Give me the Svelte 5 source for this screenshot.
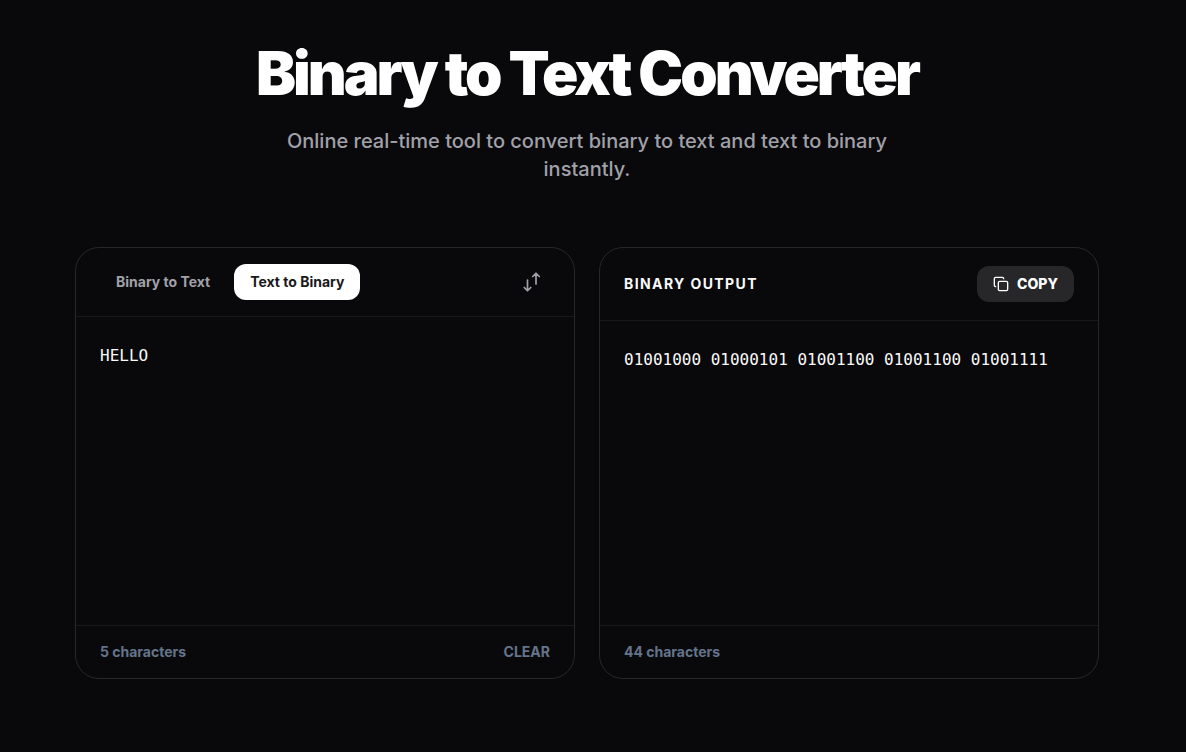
<script>
  let mode = $state('encode')
  let input = $state('HELLO')
  let copied = $state(false)

  function toBinary(text) {
    return [...new TextEncoder().encode(text)]
      .map((b) => b.toString(2).padStart(8, '0'))
      .join(' ')
  }

  function toText(bits) {
    const bytes = bits.match(/[01]{1,8}/g) ?? []
    return new TextDecoder().decode(new Uint8Array(bytes.map((b) => parseInt(b, 2))))
  }

  let output = $derived(mode === 'encode' ? toBinary(input) : toText(input))

  function setMode(next) {
    if (next === mode) return
    const current = output
    mode = next
    input = current
  }

  function swap() {
    setMode(mode === 'encode' ? 'decode' : 'encode')
  }

  async function copy() {
    await navigator.clipboard.writeText(output)
    copied = true
    setTimeout(() => (copied = false), 1500)
  }
</script>

<main class="page">
  <header class="hero">
    <h1>Binary to Text Converter</h1>
    <p>Online real-time tool to convert binary to text and text to binary instantly.</p>
  </header>

  <div class="panels">
    <!-- Input -->
    <section class="panel">
      <div class="panel-head">
        <div class="tabs">
          <button class="tab" class:active={mode === 'decode'} onclick={() => setMode('decode')}>Binary to Text</button>
          <button class="tab" class:active={mode === 'encode'} onclick={() => setMode('encode')}>Text to Binary</button>
        </div>
        <button class="swap" aria-label="Swap direction" onclick={swap}>
          <svg viewBox="0 0 20 20" width="20" height="20" fill="none" stroke="currentColor" stroke-width="1.7" stroke-linecap="round" stroke-linejoin="round">
            <path d="M5.5 8v10.5M2.25 15.5l3.25 3.25 3.25-3.25"/>
            <path d="M14 12V1.5M10.75 4.5L14 1.25l3.25 3.25"/>
          </svg>
        </button>
      </div>
      <textarea class="code" aria-label="Input" spellcheck="false" bind:value={input}></textarea>
      <div class="panel-foot">
        <span>{input.length} characters</span>
        <button class="clear" onclick={() => (input = '')}>CLEAR</button>
      </div>
    </section>

    <!-- Output -->
    <section class="panel">
      <div class="panel-head">
        <h2>{mode === 'encode' ? 'BINARY OUTPUT' : 'TEXT OUTPUT'}</h2>
        <button class="copy" onclick={copy}>
          <svg viewBox="0 0 24 24" width="16" height="16" fill="none" stroke="currentColor" stroke-width="2" stroke-linecap="round" stroke-linejoin="round">
            <rect x="8" y="8" width="14" height="14" rx="2"/>
            <path d="M4 16c-1.1 0-2-.9-2-2V4c0-1.1.9-2 2-2h10c1.1 0 2 .9 2 2"/>
          </svg>
          {copied ? 'COPIED' : 'COPY'}
        </button>
      </div>
      <output class="code">{output}</output>
      <div class="panel-foot">
        <span>{output.length} characters</span>
      </div>
    </section>
  </div>
</main>

<style>
  :global(body) {
    margin: 0;
    background: #09090b;
  }

  .page {
    box-sizing: border-box;
    min-height: 100vh;
    padding: 40px 36px 72px 24px;
    background: #09090b;
    color: #fafafa;
    font-family: Inter, "Liberation Sans", sans-serif;
  }

  .hero {
    max-width: 672px;
    margin: 0 auto 64px;
    text-align: center;
  }

  h1 {
    margin: 0 0 21px;
    color: #fff;
    font-size: 60px;
    font-weight: 900;
    line-height: 66px;
    letter-spacing: -0.05em;
    white-space: nowrap;
  }

  .hero p {
    margin: 0;
    color: #a1a1aa;
    font-size: 20px;
    font-weight: 500;
    line-height: 28px;
  }

  .panels {
    display: grid;
    grid-template-columns: repeat(2, minmax(0, 1fr));
    gap: 24px;
    max-width: 1024px;
    margin: 0 auto;
  }

  .panel {
    display: flex;
    flex-direction: column;
    min-height: 430px;
    border: 1px solid #27272a;
    border-radius: 24px;
    overflow: hidden;
  }

  .panel-head {
    display: flex;
    align-items: center;
    justify-content: space-between;
    padding: 16px 24px;
    border-bottom: 1px solid #18181b;
  }

  .panel-head:has(h2) { padding: 18px 24px; }

  .tabs {
    display: flex;
    gap: 8px;
  }

  button {
    border: 0;
    background: none;
    font-family: inherit;
    cursor: pointer;
  }

  .tab {
    padding: 8px 16px;
    border-radius: 12px;
    color: #a1a1aa;
    font-size: 14px;
    font-weight: 700;
    line-height: 20px;
  }

  .tab.active {
    background: #fff;
    color: #18181b;
  }

  .swap {
    display: flex;
    padding: 8px;
    color: #a1a1aa;
  }

  h2 {
    margin: 0;
    font-size: 14px;
    font-weight: 700;
    line-height: 20px;
    letter-spacing: 0.1em;
  }

  .copy {
    display: flex;
    align-items: center;
    gap: 8px;
    padding: 8px 16px;
    border-radius: 12px;
    background: #27272a;
    color: #fff;
    font-size: 14px;
    font-weight: 800;
    line-height: 20px;
  }

  .code {
    flex: 1;
    padding: 24px;
    border: 0;
    outline: 0;
    resize: none;
    background: none;
    color: #fafafa;
    font-family: Consolas, "DejaVu Sans Mono", monospace;
    font-size: 16px;
    line-height: 30px;
    overflow-wrap: anywhere;
  }

  .panel-foot {
    display: flex;
    align-items: center;
    justify-content: space-between;
    padding: 16px 24px;
    border-top: 1px solid #18181b;
    color: #64748b;
    font-size: 14px;
    font-weight: 700;
    line-height: 20px;
  }

  .clear {
    padding: 0;
    color: inherit;
    font-size: 14px;
    font-weight: 700;
    line-height: 20px;
  }

  @media (max-width: 768px) {
    .panels { grid-template-columns: 1fr; }
    h1 { font-size: 40px; line-height: 44px; white-space: normal; }
  }
</style>
